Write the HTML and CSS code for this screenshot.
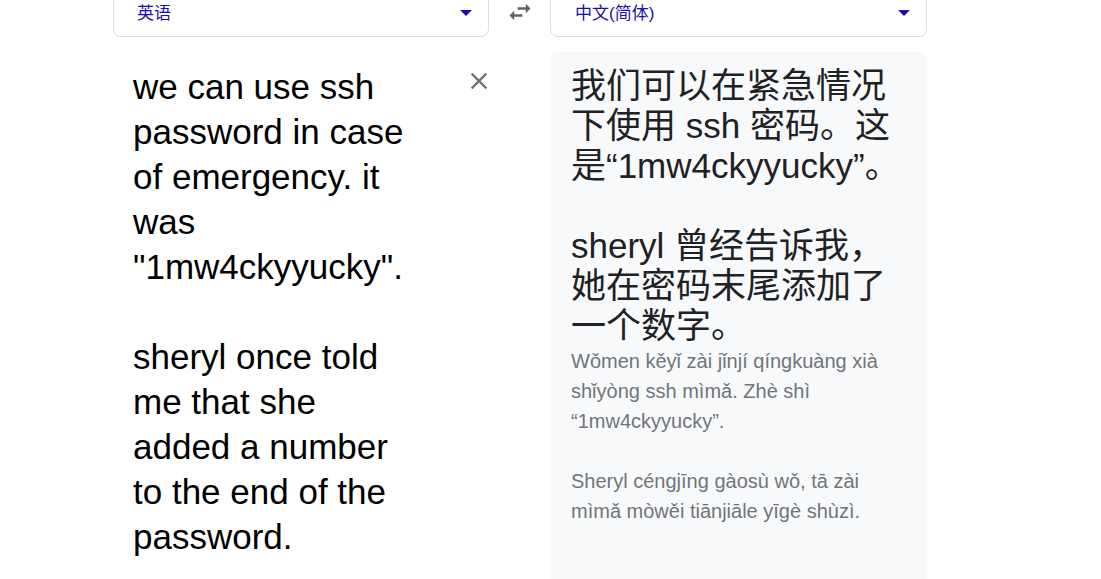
FILE: index.html
```html
<!DOCTYPE html>
<html lang="zh-CN">
<head>
<meta charset="utf-8">
<title>翻译</title>
<link rel="stylesheet" href="styles.css">
</head>
<body>
<main class="translator">
  <div class="lang-select lang-source">
    <span class="lang-name">英语</span>
    <span class="caret"></span>
  </div>
  <div class="swap">
    <svg class="swap-icon" viewBox="0 0 24 24" aria-hidden="true"><path d="M6.99 11L3 15l3.99 4v-3H14v-2H6.99v-3zM21 9l-3.99-4v3H10v2h7.01v3L21 9z"/></svg>
  </div>
  <div class="lang-select lang-target">
    <span class="lang-name">中文(简体)</span>
    <span class="caret"></span>
  </div>

  <section class="source">
    <div class="source-text">
      <p>we can use ssh password in case of emergency. it was "1mw4ckyyucky".</p>
      <p class="gap-src">sheryl once told me that she added a number to the end of the password.</p>
    </div>
    <svg class="clear-icon" viewBox="0 0 24 24" aria-hidden="true"><path d="M19 6.41L17.59 5 12 10.59 6.41 5 5 6.41 10.59 12 5 17.59 6.41 19 12 13.41 17.59 19 19 17.59 13.41 12z"/></svg>
  </section>
  <div class="spacer"></div>
  <section class="target">
    <div class="target-text">
      <p>我们可以在紧急情况下使用 ssh 密码。这是“1mw4ckyyucky”。</p>
      <p class="gap-tgt">sheryl 曾经告诉我，她在密码末尾添加了一个数字。</p>
    </div>
    <div class="pinyin">
      <p>Wǒmen kěyǐ zài jǐnjí qíngkuàng xià shǐyòng ssh mìmǎ. Zhè shì “1mw4ckyyucky”.</p>
      <p class="gap-pin">Sheryl céngjīng gàosù wǒ, tā zài mìmǎ mòwěi tiānjiāle yīgè shùzì.</p>
    </div>
  </section>
</main>
</body>
</html>
```
FILE: styles.css
```css
html, body {
  margin: 0;
  padding: 0;
  background: #ffffff;
}

body {
  font-family: "Liberation Sans", Arial, "Noto Sans CJK SC", sans-serif;
  overflow: hidden;
}

p {
  margin: 0;
}

.translator {
  display: grid;
  grid-template-columns: 376px 61px 377px;
  grid-template-rows: 49px auto;
  row-gap: 15px;
  margin: -12px 0 0 113px;
}

.lang-select {
  box-sizing: border-box;
  height: 49px;
  border: 1px solid #dadce0;
  border-radius: 8px;
  display: flex;
  align-items: center;
  justify-content: space-between;
  padding: 0 16px 3px 23px;
  font-size: 17px;
  color: #1a0dab;
  background: #fff;
}

.lang-target {
  padding-left: 24px;
}

.caret {
  width: 0;
  height: 0;
  border-left: 6px solid transparent;
  border-right: 6px solid transparent;
  border-top: 6px solid #1a0dab;
  margin-top: 3px;
}

.swap {
  display: flex;
  justify-content: center;
  align-items: flex-start;
}

.swap-icon {
  width: 28px;
  height: 28px;
  fill: #5f6368;
  margin-top: 10px;
}

.source {
  display: flex;
  align-items: flex-start;
  padding: 12px 0 0 20px;
}

.source-text {
  width: 282px;
  font-size: 35px;
  line-height: 45px;
  color: #000;
}

.gap-src {
  margin-top: 45px;
}

.clear-icon {
  width: 28px;
  height: 28px;
  fill: #70757a;
  margin: 3px -4px 0 auto;
  flex: none;
}

.target {
  background: #f8f9fa;
  border-radius: 8px;
  padding: 14px 26px 40px 21px;
  min-height: 500px;
}

.target-text {
  font-size: 35px;
  line-height: 40px;
  color: #202124;
}

.gap-tgt {
  margin-top: 40px;
}

.pinyin {
  font-size: 20px;
  line-height: 30px;
  color: #70757a;
}

.gap-pin {
  margin-top: 30px;
}
```
